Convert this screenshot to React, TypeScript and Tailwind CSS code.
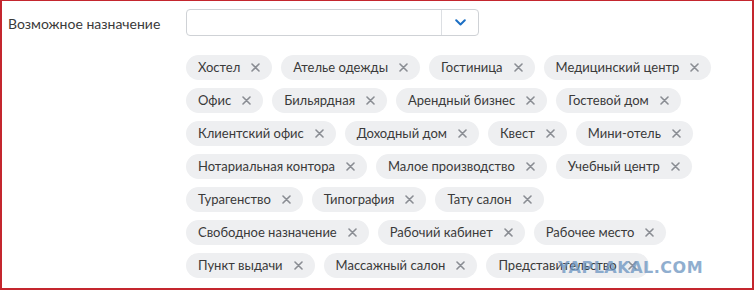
import * as React from "react"

const PURPOSES = [
  "Хостел",
  "Ателье одежды",
  "Гостиница",
  "Медицинский центр",
  "Офис",
  "Бильярдная",
  "Арендный бизнес",
  "Гостевой дом",
  "Клиентский офис",
  "Доходный дом",
  "Квест",
  "Мини-отель",
  "Нотариальная контора",
  "Малое производство",
  "Учебный центр",
  "Турагенство",
  "Типография",
  "Тату салон",
  "Свободное назначение",
  "Рабочий кабинет",
  "Рабочее место",
  "Пункт выдачи",
  "Массажный салон",
  "Представительство",
]

function Chip({ label }: { label: string }) {
  return (
    <div className="flex h-[25px] items-center gap-[11px] rounded-full bg-[#eeeff1] px-[12px] text-[13px] text-[#3a3a3a]">
      <span>{label}</span>
      <svg width="9" height="9" viewBox="0 0 9 9" className="text-[#8a8d93]">
        <path d="M1 1L8 8M8 1L1 8" stroke="currentColor" strokeWidth="1.6" strokeLinecap="round" />
      </svg>
    </div>
  )
}

export default function App() {
  return (
    <div className="relative h-[290px] w-[754px] overflow-hidden border-2 border-t border-[#c4262e] bg-white font-['Lato','Noto_Sans',sans-serif]">
      <div className="flex pt-[8px]">
        {/* Label column */}
        <div className="w-[184px] shrink-0 pl-[6px] pt-[4px] text-[14px] text-[#3a3a3a]">
          Возможное назначение
        </div>

        <div className="flex-1">
          {/* Select */}
          <div className="flex h-[27px] w-[293px] rounded-[4px] border border-[#cfd2d6]">
            <div className="flex-1" />
            <div className="flex w-[37px] items-center justify-center border-l border-[#dcdfe3]">
              <svg width="11" height="7" viewBox="0 0 11 7">
                <path d="M1.2 1.2L5.5 5.5L9.8 1.2" fill="none" stroke="#1c6fc4" strokeWidth="2" strokeLinecap="round" strokeLinejoin="round" />
              </svg>
            </div>
          </div>

          {/* Selected chips */}
          <div className="mt-[19px] flex w-[540px] flex-wrap gap-x-[9px] gap-y-[8px]">
            {PURPOSES.map((p) => (
              <Chip key={p} label={p} />
            ))}
          </div>
        </div>
      </div>

      {/* watermark */}
      <div className="absolute left-[556px] top-[255px] font-['DejaVu_Sans',sans-serif] text-[16px] font-bold tracking-[0.5px] text-[#6b94c0] opacity-75">
        YAPLAKAL.COM
      </div>
    </div>
  )
}
